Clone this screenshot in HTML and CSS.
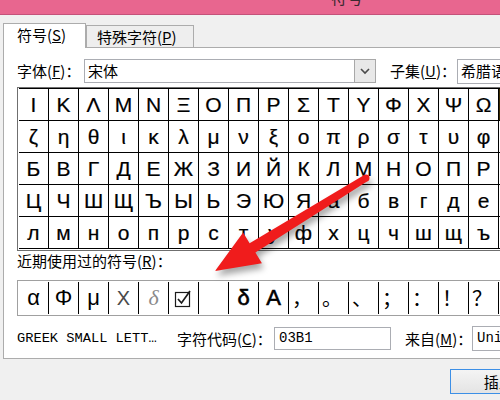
FILE: index.html
```html
<!DOCTYPE html>
<html lang="zh-CN">
<head>
<meta charset="utf-8">
<title>符号</title>
<link rel="stylesheet" href="styles.css">
</head>
<body>
<div class="titlebar"><span class="title">符号</span></div>
<div class="dialog">
  <div class="tabs">
    <div class="tab tab-active">符号(<u>S</u>)</div>
    <div class="tab tab-other">特殊字符(<u>P</u>)</div>
  </div>
  <div class="panel">
    <div class="fontrow">
      <span class="label font-label">字体(<u>F</u>)：</span>
      <div class="select font-select">
        <span class="value">宋体</span>
        <span class="drop"><svg width="10" height="7" viewBox="0 0 10 7"><polyline points="1,1 5,5 9,1" fill="none" stroke="#4a4a4a" stroke-width="1.6"/></svg></span>
      </div>
      <span class="label subset-label">子集(<u>U</u>)：</span>
      <div class="select subset-select"><span class="value">希腊语</span></div>
    </div>
    <div class="charbox">
      <div class="chargrid">
        <span class="cell">Ι</span><span class="cell">Κ</span><span class="cell">Λ</span><span class="cell">Μ</span><span class="cell">Ν</span><span class="cell">Ξ</span><span class="cell">Ο</span><span class="cell">Π</span><span class="cell">Ρ</span><span class="cell">Σ</span><span class="cell">Τ</span><span class="cell">Υ</span><span class="cell">Φ</span><span class="cell">Χ</span><span class="cell">Ψ</span><span class="cell">Ω</span><span class="cell cell-sel">α</span>
        <span class="cell">ζ</span><span class="cell">η</span><span class="cell">θ</span><span class="cell">ι</span><span class="cell">κ</span><span class="cell">λ</span><span class="cell">μ</span><span class="cell">ν</span><span class="cell">ξ</span><span class="cell">ο</span><span class="cell">π</span><span class="cell">ρ</span><span class="cell">σ</span><span class="cell">τ</span><span class="cell">υ</span><span class="cell">φ</span><span class="cell">χ</span>
        <span class="cell">Б</span><span class="cell">В</span><span class="cell">Г</span><span class="cell">Д</span><span class="cell">Е</span><span class="cell">Ж</span><span class="cell">З</span><span class="cell">И</span><span class="cell">Й</span><span class="cell">К</span><span class="cell">Л</span><span class="cell">М</span><span class="cell">Н</span><span class="cell">О</span><span class="cell">П</span><span class="cell">Р</span><span class="cell">С</span>
        <span class="cell">Ц</span><span class="cell">Ч</span><span class="cell">Ш</span><span class="cell">Щ</span><span class="cell">Ъ</span><span class="cell">Ы</span><span class="cell">Ь</span><span class="cell">Э</span><span class="cell">Ю</span><span class="cell">Я</span><span class="cell">а</span><span class="cell">б</span><span class="cell">в</span><span class="cell">г</span><span class="cell">д</span><span class="cell">е</span><span class="cell">ж</span>
        <span class="cell">л</span><span class="cell">м</span><span class="cell">н</span><span class="cell">о</span><span class="cell">п</span><span class="cell">р</span><span class="cell">с</span><span class="cell">т</span><span class="cell">у</span><span class="cell">ф</span><span class="cell">х</span><span class="cell">ц</span><span class="cell">ч</span><span class="cell">ш</span><span class="cell">щ</span><span class="cell">ъ</span><span class="cell">ы</span>
      </div>
    </div>
    <div class="recent-label">近期使用过的符号(<u>R</u>)：</div>
    <div class="recent">
      <span class="rc">α</span>
      <span class="rc">Φ</span>
      <span class="rc">μ</span>
      <span class="rc rc-thin">X</span>
      <span class="rc rc-italic">δ</span>
      <span class="rc rc-check"><svg width="20" height="20" viewBox="0 0 20 20"><rect x="1.5" y="4.5" width="14" height="14" fill="none" stroke="#1a1a1a" stroke-width="1.2"/><polyline points="4,11 7.5,15 16,3" fill="none" stroke="#1a1a1a" stroke-width="1.7"/></svg></span>
      <span class="rc"></span>
      <span class="rc rc-heavy">δ</span>
      <span class="rc rc-heavy">Α</span>
      <span class="rc rc-cjk">，</span>
      <span class="rc rc-cjk">。</span>
      <span class="rc rc-cjk">、</span>
      <span class="rc rc-cjk">；</span>
      <span class="rc rc-cjk">：</span>
      <span class="rc rc-cjk">！</span>
      <span class="rc rc-cjk">？</span>
      <span class="rc"></span>
    </div>
    <div class="inforow">
      <span class="charname">GREEK SMALL LETT…</span>
      <span class="label code-label">字符代码(<u>C</u>)：</span>
      <div class="field code-field">03B1</div>
      <span class="label from-label">来自(<u>M</u>)：</span>
      <div class="field from-field">Unicode(十六进制)</div>
    </div>
  </div>
  <div class="footer"><div class="btn">插入(<u>I</u>)</div></div>
</div>
<svg class="arrow" width="500" height="400" viewBox="0 0 500 400">
  <circle cx="366" cy="178" r="3.5" fill="#f01c1c"/>
  <polygon points="364.2,175 249.6,243.2 243.1,232.6 215,271 261.9,263.2 255.4,252.6 367.8,181" fill="#f01c1c"/>
</svg>
</body>
</html>
```
FILE: styles.css
```css
* {
  box-sizing: border-box;
}

body {
  margin: 0;
  width: 500px;
  height: 400px;
  overflow: hidden;
  position: relative;
  background: #f0f0f0;
  font-family: "Noto Sans CJK SC", sans-serif;
  font-size: 15px;
  color: #000;
}

u {
  text-decoration: underline;
  text-underline-offset: 1px;
}

.titlebar {
  height: 15px;
  background: #e8668f;
  border-bottom: 1px solid #c4527a;
  overflow: hidden;
}

.title {
  display: block;
  padding-left: 331px;
  margin-top: -13px;
  font-size: 16px;
  line-height: 20px;
  color: #3b2930;
}

.dialog {
  width: 760px;
  padding: 8px 0 0 3px;
}

.tabs {
  display: flex;
  align-items: flex-end;
}

.tab {
  border: 1px solid #acacac;
  border-bottom: none;
  white-space: nowrap;
}

.tab-active {
  width: 83px;
  height: 25px;
  margin-bottom: -1px;
  padding-left: 13px;
  line-height: 22px;
  background: #fff;
  position: relative;
  z-index: 1;
}

.tab-other {
  width: 108px;
  height: 22px;
  padding-left: 10px;
  line-height: 21px;
  background: #eeeeee;
}

.panel {
  width: 740px;
  background: #fff;
  border: 1px solid #acacac;
  padding: 11px 0 7px 13px;
}

.fontrow {
  display: flex;
  align-items: center;
  height: 24px;
}

.label {
  flex: none;
  white-space: nowrap;
  line-height: 20px;
}

.font-label {
  width: 67px;
}

.select {
  flex: none;
  display: flex;
  align-items: center;
  height: 24px;
  border: 1px solid #abadb3;
  padding-left: 3px;
  background: #fff;
}

.value {
  line-height: 20px;
}

.font-select {
  width: 292px;
}

.drop {
  margin-left: auto;
  width: 22px;
  align-self: stretch;
  display: flex;
  align-items: center;
  justify-content: center;
  background: #e8e8e8;
  border: 1px solid #a8a8a8;
  margin-top: -1px;
  margin-bottom: -1px;
  margin-right: -1px;
}

.subset-label {
  margin-left: 14px;
  width: 67px;
}

.subset-select {
  width: 150px;
  height: 25px;
}

.charbox {
  margin-top: 4px;
  width: 700px;
  height: 164px;
  border: 1px solid #6f6f6f;
  padding: 0 0 1px 1px;
  background: #fff;
  overflow: hidden;
}

.chargrid {
  display: grid;
  grid-template-columns: repeat(17, 29px);
  grid-auto-rows: 31px;
  gap: 1px;
  width: max-content;
  background: #000;
  border-top: 1px solid #000;
  padding-bottom: 1px;
}

.cell {
  background: #fff;
  font-family: "Liberation Sans", sans-serif;
  font-size: 21px;
  line-height: 31px;
  text-align: center;
  -webkit-text-stroke: 0.2px #000;
}

.cell-sel {
  box-shadow: inset 1px 0 0 #3a2a00;
}

.recent-label {
  height: 20px;
  line-height: 20px;
  white-space: nowrap;
}

.recent {
  margin-top: 9px;
  width: 700px;
  height: 36px;
  display: flex;
  border: 1px solid #a0a0a0;
  padding: 1px 0 1px 1px;
  background: #fff;
}

.rc {
  flex: none;
  width: 30px;
  height: 32px;
  border-right: 1px solid #000;
  font-family: "Liberation Sans", sans-serif;
  font-size: 22px;
  line-height: 32px;
  text-align: center;
}

.rc-thin {
  color: #4a4a4a;
  font-size: 20px;
}

.rc-italic {
  font-family: "Liberation Serif", serif;
  font-style: italic;
  color: #8a8a8a;
}

.rc-check {
  display: flex;
  align-items: center;
  justify-content: center;
}

.rc-heavy {
  -webkit-text-stroke: 0.6px #000;
}

.rc-cjk {
  font-family: "Noto Sans CJK SC", sans-serif;
  font-size: 20px;
  text-align: left;
  padding-left: 3px;
}

.inforow {
  margin-top: 10px;
  display: flex;
  align-items: center;
  height: 25px;
}

.charname {
  flex: none;
  width: 160px;
  font-family: "Liberation Mono", monospace;
  font-size: 13.7px;
  white-space: nowrap;
}

.code-label {
  width: 97px;
}

.field {
  flex: none;
  height: 23px;
  border: 1px solid #abadb3;
  padding-left: 4px;
  font-family: "Liberation Mono", monospace;
  font-size: 14px;
  line-height: 21px;
  background: #fff;
  white-space: nowrap;
  overflow: hidden;
}

.code-field {
  width: 117px;
}

.from-label {
  margin-left: 14px;
  width: 67px;
}

.from-field {
  width: 150px;
  height: 25px;
  line-height: 23px;
}

.footer {
  margin-top: 10px;
  padding-left: 447px;
}

.btn {
  width: 112px;
  height: 25px;
  border: 1px solid #3c8fe6;
  background: linear-gradient(#f4f4f4, #e4e4e4);
  text-align: center;
  line-height: 23px;
  white-space: nowrap;
}

.arrow {
  position: absolute;
  left: 0;
  top: 0;
  pointer-events: none;
  filter: drop-shadow(2px 5px 3px rgba(0, 0, 0, 0.35));
}
```
